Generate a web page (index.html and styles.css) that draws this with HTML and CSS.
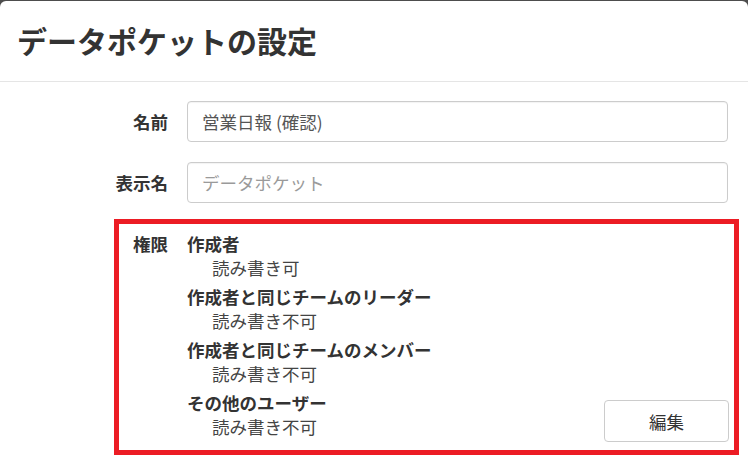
FILE: index.html
```html
<!DOCTYPE html>
<html lang="ja">
<head>
<meta charset="utf-8">
<title>データポケットの設定</title>
<link rel="stylesheet" href="styles.css">
</head>
<body>
<div class="modal">
  <div class="modal-header">
    <h1 class="modal-title">データポケットの設定</h1>
  </div>
  <div class="modal-body">
    <div class="form-row">
      <label class="form-label">名前</label>
      <div class="input">営業日報 (確認)</div>
    </div>
    <div class="form-row">
      <label class="form-label">表示名</label>
      <div class="input placeholder">データポケット</div>
    </div>
    <div class="highlight">
      <div class="perm-row">
        <div class="form-label perm-label">権限</div>
        <div class="perm-content">
          <div class="perm-list">
            <div class="perm-group">
              <div class="perm-who">作成者</div>
              <div class="perm-what">読み書き可</div>
            </div>
            <div class="perm-group">
              <div class="perm-who">作成者と同じチームのリーダー</div>
              <div class="perm-what">読み書き不可</div>
            </div>
            <div class="perm-group">
              <div class="perm-who">作成者と同じチームのメンバー</div>
              <div class="perm-what">読み書き不可</div>
            </div>
            <div class="perm-group">
              <div class="perm-who">その他のユーザー</div>
              <div class="perm-what">読み書き不可</div>
            </div>
          </div>
          <button class="btn">編集</button>
        </div>
      </div>
    </div>
  </div>
</div>
</body>
</html>
```
FILE: styles.css
```css
html, body {
  margin: 0;
  padding: 0;
}
body {
  background: #4d4d4d;
  font-family: "Noto Sans CJK JP", "Noto Sans", sans-serif;
  color: #333;
  width: 748px;
  height: 466px;
  overflow: hidden;
}
.modal {
  margin-top: 1px;
  background: #fff;
  border-radius: 6px 6px 0 0;
  height: 465px;
}
.modal-header {
  height: 80px;
  border-bottom: 1px solid #e5e5e5;
  display: flex;
  align-items: center;
  padding-left: 17px;
}
.modal-title {
  margin: 0;
  font-size: 30px;
  font-weight: bold;
  line-height: 36px;
  color: #333;
  position: relative;
  top: -1px;
}
.modal-body {
  padding-top: 19px;
}
.form-row {
  display: grid;
  grid-template-columns: 168px 541px;
  column-gap: 19px;
  align-items: center;
  margin-bottom: 20px;
}
.form-label {
  text-align: right;
  font-size: 17.5px;
  font-weight: bold;
  color: #333;
}
.input {
  height: 39px;
  border: 1px solid #ccc;
  border-radius: 4px;
  padding: 0 14px;
  font-size: 17.5px;
  line-height: 39px;
  color: #555;
  box-shadow: inset 0 1px 1px rgba(0,0,0,0.05);
}
.input.placeholder {
  color: #9a9a9a;
}
.highlight {
  margin: -4px 9px 0 114px;
  border: 5px solid #ec1c24;
  padding: 8px 5px 8px 0;
}
.perm-row {
  display: grid;
  grid-template-columns: 49px 1fr;
  column-gap: 19px;
}
.perm-label {
  line-height: 24px;
}
.perm-content {
  display: flex;
  justify-content: space-between;
}
.perm-list {
  padding-bottom: 3px;
}
.perm-group + .perm-group {
  margin-top: 5px;
}
.perm-who {
  font-size: 17.5px;
  font-weight: bold;
  line-height: 24px;
  color: #333;
}
.perm-what {
  font-size: 17.5px;
  line-height: 24px;
  padding-left: 25px;
  color: #444;
}
.btn {
  align-self: flex-end;
  width: 125px;
  height: 42px;
  background: #fff;
  border: 1px solid #ccc;
  border-radius: 4px;
  font-family: inherit;
  font-size: 17.5px;
  color: #333;
  padding: 0;
}
```
